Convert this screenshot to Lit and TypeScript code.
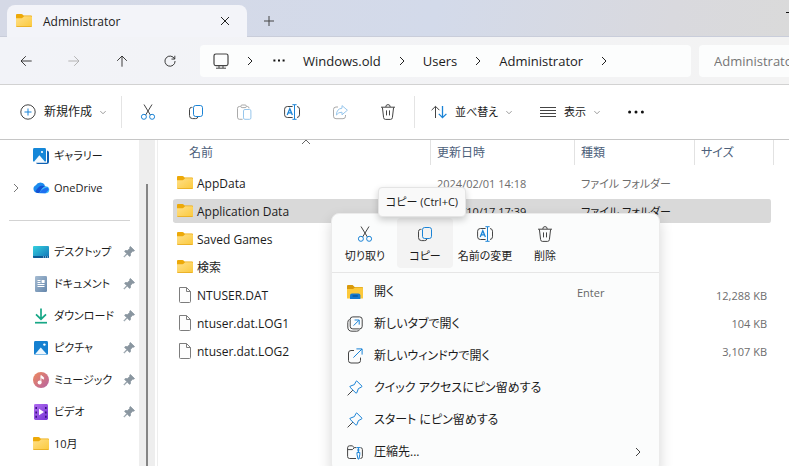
import { LitElement, html, svg, css, nothing, type TemplateResult } from "lit";
import { customElement, property } from "lit/decorators.js";
import { classMap } from "lit/directives/class-map.js";

/* All glyphs are drawn on a 16 x 16 grid. */
const glyphs: Record<string, TemplateResult> = {
  folder: svg`
    <defs><linearGradient id="f" x1="0" y1="0" x2="1" y2="1">
      <stop offset="0" stop-color="#ffe08a"/><stop offset="1" stop-color="#fbc93c"/>
    </linearGradient></defs>
    <path d="M0 2Q0 1 1 1H5.5Q6 1 6.6 1.6L7.6 2.6H15Q16 2.6 16 3.6V9H0Z" fill="#eda908"/>
    <path d="M0 5.2H5.6Q6.2 5.2 6.8 4.6L7.4 4Q7.8 3.2 8.4 3.2H15Q16 3.2 16 4.2V13Q16 14 15 14H1Q0 14 0 13Z" fill="url(#f)"/>
    <path d="M0 12.6Q0 14 1.2 14H14.8Q16 14 16 12.6Q16 13.2 14.8 13.2H1.2Q0 13.2 0 12.6Z" fill="#e6a91b"/>`,
  explorer: svg`
    <path d="M0 2Q0 1 1 1H5.6L7.6 3H15Q16 3 16 4V8H0Z" fill="#d99a0b"/>
    <path d="M0 5H6L8 3.6H15.4L16 4.4V14.4H0Z" fill="#fcc93b"/>
    <path d="M3 15V11.6Q3 9.6 5 9.6H11.4Q13.4 9.6 13.4 11.6V15Z" fill="#1479d0"/>
    <path d="M5.6 12H10.8" stroke="#0a4d8f" stroke-width="1.2"/>`,
  file: svg`
    <path d="M2.5 .5H9.5L13.5 4.5V14.5Q13.5 15.5 12.5 15.5H3.5Q2.5 15.5 2.5 14.5Z" fill="#fdfdfd" stroke="#7d7d7d"/>
    <path d="M9.5 .5V4.5H13.5" fill="none" stroke="#7d7d7d"/>`,
  gallery: svg`
    <path d="M14 2.4Q16 2.6 16 4.5V13.5Q16 16 13.5 16H5Q3.4 16 3 14.8H14Z" fill="#0e61b3"/>
    <rect width="13" height="14" rx="1.4" fill="#1587d8"/>
    <path d="M.8 14L6.4 7.2 12.2 14Z" fill="#f3faff"/><circle cx="9" cy="4" r="1.1" fill="#fff"/>`,
  cloud: svg`
    <path d="M4 12.8A4 4 0 0 1 2.8 5.2 5.2 5.2 0 0 1 12 5.2L6.4 12.8Z" fill="#1c8bee"/>
    <path d="M6 12.9L10.2 6.9A3.6 3.6 0 0 1 14 6.6 3.4 3.4 0 0 1 12.8 13.2H5Z" fill="#3ec0f8"/>
    <path d="M2.4 11.4Q6 5 9.6 5.8L12.8 6.2Q8.4 7.4 6.4 12.9H4Z" fill="#1352d4"/>
    <path d="M6.4 13.1Q9 8 14.6 7.2L15.8 9.8 12.4 13.3Z" fill="#1f6ff0"/>`,
  desktop: svg`
    <defs><linearGradient id="d" x1="0" y1="0" x2="1" y2="1">
      <stop offset="0" stop-color="#35d0de"/><stop offset="1" stop-color="#1273b8"/>
    </linearGradient></defs>
    <rect y="2" width="16" height="12" rx="1" fill="url(#d)"/>
    <path d="M0 12H16V13Q16 14 15 14H1Q0 14 0 13Z" fill="#0d5b95"/>
    <path d="M10 13H11M12 13H13M14 13H15" stroke="#bfe9ff"/>`,
  document: svg`
    <defs><linearGradient id="p" x1="0" y1="0" x2="1" y2="1">
      <stop offset="0" stop-color="#a6bcd2"/><stop offset="1" stop-color="#6486ab"/>
    </linearGradient></defs>
    <rect x="2" width="12" height="16" rx="1.2" fill="url(#p)"/>
    <path d="M4.5 4.5H7.5M4.5 6.5H7.5M4.5 8.5H11.5M4.5 10.5H11.5" stroke="#fff"/>
    <rect x="8.6" y="4" width="3" height="3" fill="#fff"/>`,
  download: svg`
    <path d="M8 .4V11M3 6.4L8 11.2 13 6.4" fill="none" stroke="#17a786" stroke-width="1.7"/>
    <path d="M2 14.7H14" stroke="#17a786" stroke-width="1.7"/>`,
  picture: svg`
    <rect x="1" y="1" width="14" height="14" rx="1.4" fill="#1580d0"/>
    <path d="M1.8 14.4L7.8 7.4 14 14.4Z" fill="#eef8ff"/><circle cx="11.4" cy="4.6" r="1.2" fill="#fff"/>`,
  music: svg`
    <defs><linearGradient id="m" x1="0" y1="0" x2="1" y2="1">
      <stop offset="0" stop-color="#ef8a5c"/><stop offset="1" stop-color="#b562a3"/>
    </linearGradient></defs>
    <circle cx="8" cy="8" r="8" fill="url(#m)"/>
    <circle cx="6.6" cy="10.6" r="2" fill="#fff"/><path d="M7.9 10.6V3.4L10.6 5.4V7.2L7.9 5.6" fill="#fff" stroke="#fff" stroke-width=".8"/>`,
  video: svg`
    <defs><linearGradient id="v" x1="0" y1="0" x2="1" y2="1">
      <stop offset="0" stop-color="#b06bf0"/><stop offset="1" stop-color="#7637d4"/>
    </linearGradient></defs>
    <rect x="1" width="14" height="16" rx="1.4" fill="url(#v)"/>
    <path d="M3.2 3V14M12.8 3V14" stroke="#3b1180" stroke-width="1.6" stroke-dasharray="2 2.4"/>
    <path d="M6 4.8L11 8 6 11.2Z" fill="#fff"/>`,
  pinned: svg`
    <path d="M9.6 1.6L14.4 6.4 13.2 7.2 12 7.2 9.8 9.6 9.6 12.4 8.6 13 6 10.4 2.6 13.8 2.2 13.4 5.4 9.8 3 7.4 3.6 6.4 6.4 6.2 8.8 4 8.8 2.6Z" fill="#8a96a0" stroke="#8a96a0" stroke-width=".8" stroke-linejoin="round"/>`,
  close: svg`<path d="M4 4L12 12M12 4L4 12"/>`,
  plus: svg`<path d="M8 3V13M3 8H13"/>`,
  back: svg`<path d="M14.5 8H2.5M7.8 2.5L2.3 8 7.8 13.5"/>`,
  forward: svg`<path d="M1.5 8H13.5M8.2 2.5L13.7 8 8.2 13.5"/>`,
  up: svg`<path d="M8 14.5V2.5M2.5 7.8L8 2.3 13.5 7.8"/>`,
  refresh: svg`<path d="M13.2 5.6A5.8 5.8 0 1 0 13.8 8M13.5 2V5.8H9.7"/>`,
  pc: svg`<rect x="1" y="1" width="14" height="11.6" rx="1.8" stroke-width="1.2"/><path d="M6 13V15M10 13V15M3 15.2H13"/>`,
  right: svg`<path d="M6 4L10 8 6 12"/>`,
  down: svg`<path d="M5 7L8 10 11 7"/>`,
  caretUp: svg`<path d="M4 10L8 6 12 10"/>`,
  dots: svg`<path d="M2.4 7.5h2M7 7.5h2M11.6 7.5h2" stroke-width="2"/>`,
  bigDots: svg`<g class="solid"><circle cx="1.6" cy="8" r="1.5"/><circle cx="8" cy="8" r="1.5"/><circle cx="14.4" cy="8" r="1.5"/></g>`,
  create: svg`<circle cx="8" cy="8" r="7.2"/><path class="blue" d="M8 4.5V11.5M4.5 8H11.5"/>`,
  cut: svg`<path d="M4 .5L10.4 11M12 .5L5.6 11"/><g class="blue"><circle cx="3.9" cy="12.8" r="2.5"/><circle cx="12.1" cy="12.8" r="2.5"/></g>`,
  copy: svg`<path d="M4.4 3.4H3.5Q1.5 3.4 1.5 5.6V11.6Q1.5 14.6 4.5 14.6H7.5Q9.8 14.6 9.8 13"/><rect class="blue" x="5.5" y="1.5" width="9" height="11" rx="2.2"/>`,
  paste: svg`<path d="M4.6 2.5H3.4Q1.5 2.5 1.5 4.4V13.2Q1.5 15.3 3.4 15.3H6.6M10.6 2.5H11.6Q13 2.5 13 4.4"/><rect x="4.8" y="1" width="5.6" height="2.6" rx="1.3"/><rect class="blue" x="7.5" y="5.5" width="7.4" height="9.8" rx="1.4"/>`,
  rename: svg`<path d="M8.6 2.5H3.4Q.6 2.5 .6 5.2V10.8Q.6 13.5 3.4 13.5H8.6M13 2.5Q15.5 2.8 15.5 5.2V10.8Q15.5 13.2 13 13.5"/><path class="blue" d="M10.5 1V15M8.4 .7H12.6M8.4 15.3H12.6"/><path class="blue" d="M3.2 11L5.8 4.8 8.4 11M4.2 8.9H7.4" stroke-width="1.3"/>`,
  share: svg`<path d="M6 3H4Q1.5 3 1.5 5.5V12.2Q1.5 14.7 4 14.7H11Q13.5 14.7 13.5 12.2V11"/><path class="blue" d="M10 1.6L15.4 6.2 10 10.8V8.2Q6.4 8 4.4 11Q4.6 4.8 10 4.2Z" stroke-linejoin="round"/>`,
  trash: svg`<path d="M1 3.2H15M2.4 3.4L3.6 13.6Q3.8 15.4 5.4 15.4H10.6Q12.2 15.4 12.4 13.6L13.6 3.4M5.8 3Q5.8 .6 8 .6T10.2 3M6.5 6.4V11.4M9.5 6.4V11.4"/>`,
  sort: svg`<path d="M4.5 14V2.5M.6 6.2L4.5 2.3 8.4 6.2"/><path class="blue" d="M11.5 2V13.5M7.8 9.9L11.5 13.7 15.4 9.9" stroke-width="1.3"/>`,
  lines: svg`<path d="M0 3.5H16M0 6.5H16M0 9.5H16M0 12.5H16"/>`,
  newTab: svg`<path d="M2.6 3.4Q.8 4 .8 6.4V11Q.8 15.2 5 15.2H9.6Q12 15.2 12.6 13.6"/><rect x="3.2" y=".9" width="12" height="12" rx="2.6"/><path class="blue" d="M6.6 9.6L12 4.2M7.6 4H12.2V8.6"/>`,
  newWindow: svg`<path d="M7 2.5H4Q1.5 2.5 1.5 5V12.5Q1.5 15 4 15H11Q13.5 15 13.5 12.5V9.6"/><path class="blue" d="M6.4 9.6L15 1M9.4 .9H15.1V6.6"/>`,
  pin: svg`<path class="blue" d="M9.8 1L15 6.2Q15 7 14.2 7.2L11.4 8.6 9.8 12.8 9 13.2 2.8 7 3.2 6.2 7.4 4.6 8.8 1.8Q9 1 9.8 1Z" stroke-linejoin="round"/><path d="M5.8 10.2L.6 15.4"/>`,
  zip: svg`<path d="M9 14.5H2.6Q.6 14.5 .6 12.5V3.8Q.6 1.8 2.6 1.8H5.2L7.2 3.6H9.4M.8 5.6H5.4L7.2 3.8M13.4 3.6Q15.4 3.6 15.4 5.6V12.5Q15.4 14.5 13.4 14.5"/><path class="blue" d="M9.6 3.6H13.2M11.4 3.6V9M10 6H12.6M10 8.4H12.8V10.4L12 15H11L10 10.4Z"/>`,
};

/* Glyphs that carry their own fills; the others are one-pixel outlines. */
const coloured = new Set(["folder", "explorer", "file", "gallery", "cloud", "desktop", "document", "download", "picture", "music", "video", "pinned"]);

@customElement("ui-icon")
class UiIcon extends LitElement {
  @property() name = "";
  static styles = css`
    :host { display: inline-flex; flex: none; width: 16px; height: 16px; color: #444; }
    svg { width: 100%; height: 100%; overflow: visible; }
    .line { fill: none; stroke: currentColor; }
    .blue { stroke: #1a83d6; }
    .solid { fill: currentColor; stroke: none; }
  `;
  render() {
    return html`<svg viewBox="0 0 16 16" aria-hidden="true" class=${classMap({ line: !coloured.has(this.name) })}>${glyphs[this.name]}</svg>`;
  }
}

const icon = (name: string, cls = "") => html`<ui-icon class=${cls} name=${name}></ui-icon>`;

const commands = [
  { icon: "cut", label: "切り取り" },
  { icon: "copy", label: "コピー" },
  { icon: "paste", label: "貼り付け", off: true },
  { icon: "rename", label: "名前の変更" },
  { icon: "share", label: "共有", off: true },
  { icon: "trash", label: "削除" },
];

const places = [
  { icon: "desktop", label: "デスクトップ", pinned: true },
  { icon: "document", label: "ドキュメント", pinned: true },
  { icon: "download", label: "ダウンロード", pinned: true },
  { icon: "picture", label: "ピクチャ", pinned: true },
  { icon: "music", label: "ミュージック", pinned: true },
  { icon: "video", label: "ビデオ", pinned: true },
  { icon: "folder", label: "10月", pinned: false },
];

const files = [
  { icon: "folder", name: "AppData", date: "2024/02/01 14:18", type: "ファイル フォルダー", size: "" },
  { icon: "folder", name: "Application Data", date: "2023/10/17 17:39", type: "ファイル フォルダー", size: "", selected: true },
  { icon: "folder", name: "Saved Games", date: "", type: "", size: "" },
  { icon: "folder", name: "検索", date: "", type: "", size: "" },
  { icon: "file", name: "NTUSER.DAT", date: "", type: "", size: "12,288 KB" },
  { icon: "file", name: "ntuser.dat.LOG1", date: "", type: "", size: "104 KB" },
  { icon: "file", name: "ntuser.dat.LOG2", date: "", type: "", size: "3,107 KB" },
];

const quickActions = [
  { icon: "cut", label: "切り取り" },
  { icon: "copy", label: "コピー", hover: true },
  { icon: "rename", label: "名前の変更" },
  { icon: "trash", label: "削除" },
];

const menuItems = [
  { icon: "explorer", label: "開く", key: "Enter" },
  { icon: "newTab", label: "新しいタブで開く" },
  { icon: "newWindow", label: "新しいウィンドウで開く" },
  { icon: "pin", label: "クイック アクセスにピン留めする" },
  { icon: "pin", label: "スタート にピン留めする" },
  { icon: "zip", label: "圧縮先...", sub: true },
];

@customElement("app-root")
class AppRoot extends LitElement {
  static styles = css`
    :host {
      display: flex; flex-direction: column; position: relative;
      height: 100vh; overflow: hidden; background: #fff; color: #1b1b1b;
      font: 12px/16px "Open Sans", "Noto Sans CJK JP", sans-serif;
      font-feature-settings: "palt";
    }
    * { box-sizing: border-box; }
    button, input { font: inherit; font-feature-settings: inherit; color: inherit; background: none; border: 0; padding: 0; margin: 0; outline: 0; }
    button { display: inline-flex; align-items: center; justify-content: center; white-space: nowrap; }
    a { color: inherit; text-decoration: none; }

    .titlebar {
      display: flex; align-items: flex-end; height: 37px; flex: none; padding-left: 7px;
      background: linear-gradient(100deg, #d5d9e6, #d3daea 55%, #d9d9de 85%, #dadada);
      box-shadow: inset 0 -1px #c9cdda;
    }
    .tab {
      display: flex; align-items: center; width: 240px; height: 32px; padding: 0 14px 0 9px;
      border-radius: 8px 8px 0 0; background: #f3f4f9;
    }
    .tab ui-icon { margin-right: 11px; }
    .tab span { flex: 1; padding-top: 2px; }
    .tab button ui-icon { margin: 0; color: #222; }
    .add { width: 44px; height: 32px; }
    .minimize { margin-left: auto; align-self: flex-start; width: 3px; height: 25px; }
    .minimize::before { content: ""; width: 3px; height: 1px; background: #111; }

    .navbar {
      display: flex; align-items: center; height: 48px; flex: none; padding-left: 2px;
      background: linear-gradient(100deg, #f2f3f8, #f3f3f3); border-bottom: 1px solid #d2d2d2;
    }
    .navbar > button { width: 48px; height: 32px; }
    .navbar > button ui-icon { width: 14px; height: 14px; color: #222; }
    .navbar > button[disabled] ui-icon { color: #aaa; }
    .address {
      display: flex; align-items: center; flex: 1; height: 32px; margin: 0 8px 0 6px; padding-left: 13px;
      border-radius: 4px; background: #fcfdfd; font-size: 13px;
    }
    .address .sep { margin: 0 13px; color: #222; }
    .address .others { margin-right: 16px; }
    .others ui-icon { color: #111; }
    .address .crumb { white-space: nowrap; }
    .search { width: 90px; height: 32px; flex: none; padding-left: 15px; border-radius: 4px 0 0 4px; background: #fcfdfd; font-size: 13px; }
    .search::placeholder { color: #757575; opacity: 1; }

    .commands { display: flex; align-items: center; height: 55px; flex: none; padding-left: 20px; border-bottom: 1px solid #c6c6c6; }
    .tools { display: flex; padding: 0 2px; }
    .tool { width: 48px; height: 32px; }
    .off { opacity: .45; }
    .drop { height: 32px; justify-content: flex-start; }
    .drop ui-icon + span { margin: 0 4px 0 8px; }
    .drop .chev { width: 14px; height: 14px; color: #8a8a8a; }
    .rule { width: 1px; height: 32px; background: #e4e4e4; }
    .new { width: 101px; }
    .order { width: 109px; margin-left: 16px; font-size: 11px; }
    .view { width: 88px; font-size: 11px; }
    .more ui-icon { color: #111; }

    .body { display: flex; flex: 1; min-height: 0; }
    nav { width: 139px; flex: none; overflow: hidden; font-size: 11px; }
    nav a { display: flex; align-items: center; height: 32px; padding: 0 3px 0 8px; white-space: nowrap; }
    nav a .lead { width: 25px; flex: none; display: flex; }
    nav a .lead ui-icon { color: #777; }
    nav a .label { flex: 1; margin-left: 5px; }
    .pinned { width: 14px; height: 14px; }
    nav hr { height: 1px; margin: 16px 9px 15px; border: 0; background: #d3d3d3; }
    .track { display: flex; justify-content: center; width: 16px; flex: none; padding-top: 44px; background: #eee; }
    .track div { width: 2px; background: #858585; }
    main { flex: 1; min-width: 0; margin-left: 2px; padding: 0 15px; border-left: 1px solid #eee; }

    table { width: 100%; table-layout: fixed; border-collapse: separate; border-spacing: 0; white-space: nowrap; }
    th { position: relative; height: 29px; padding: 0; vertical-align: top; text-align: left; font-weight: 400; color: #4c607a; }
    th div { height: 25px; padding: 5px 6px 0; border-left: 1px solid #e2e2e2; }
    th:first-child div { border-left: 0; padding-left: 16px; }
    th:last-child div { border-right: 1px solid #e2e2e2; }
    th ui-icon { position: absolute; top: -6px; left: calc(50% - 4px); color: #666; }
    .date { width: 144px; } .type { width: 120px; } .size { width: 80px; }
    td { height: 28px; padding: 2px 0 0 7px; font-size: 11px; color: #6d6d6d; border: solid transparent; border-width: 2px 0; background-clip: padding-box; }
    td:first-child { padding: 0 0 0 4px; font-size: 12px; color: #1b1b1b; border-radius: 4px 0 0 4px; }
    td:last-child { padding-right: 4px; border-right-width: 3px; text-align: right; border-radius: 0 5px 5px 0; }
    .selected td { background-color: #d9d9d9; color: #1b1b1b; }
    .name { display: flex; align-items: center; gap: 4px; }
    .name span { padding-top: 2px; }

    .menu {
      position: absolute; top: 213px; left: 331px; width: 329px; border: 1px solid #ebebeb; border-radius: 8px;
      background: #fbfcfc; box-shadow: 0 6px 14px rgba(0, 0, 0, .16);
    }
    .quick { display: flex; gap: 4px; padding: 4px 5px; border-bottom: 1px solid #e6e6e6; font-size: 11px; }
    .quick button { flex-direction: column; justify-content: flex-start; gap: 6px; width: 56px; height: 50px; padding-top: 8px; border-radius: 4px; }
    .quick .hover { background: #f3f3f3; }
    .items { padding: 3px 0; }
    .items button { display: grid; grid-template-columns: 16px 1fr 42px 16px; column-gap: 11px; width: 100%; height: 32px; padding: 0 13px 0 15px; text-align: left; }
    .items button .key { grid-column: 3; padding-top: 2px; font-size: 11px; color: #666; }
    .items .sub { grid-column: 4; }
    .tooltip {
      position: absolute; top: 187px; left: 378px; width: 88px; height: 30px; line-height: 28px; text-align: center; font-size: 11px;
      border: 1px solid #e4e4e4; border-radius: 4px; background: #f9f9f9; box-shadow: 0 3px 7px rgba(0, 0, 0, .2);
    }
  `;

  private crumb(text: string) {
    return html`<a class="crumb" href="#">${text}</a>${icon("right", "sep")}`;
  }

  render() {
    return html`
      <header class="titlebar">
        <div class="tab">${icon("folder")}<span>Administrator</span><button aria-label="閉じる">${icon("close")}</button></div>
        <button class="add" aria-label="新しいタブ">${icon("plus")}</button>
        <button class="minimize" aria-label="最小化"></button>
      </header>
      <div class="navbar">
        <button aria-label="戻る">${icon("back")}</button>
        <button aria-label="進む" disabled>${icon("forward")}</button>
        <button aria-label="上へ">${icon("up")}</button>
        <button aria-label="更新">${icon("refresh")}</button>
        <div class="address">
          ${icon("pc")}${icon("right", "sep")}
          <button class="others" aria-label="その他の場所">${icon("dots")}</button>
          ${["Windows.old", "Users", "Administrator"].map((c) => this.crumb(c))}
        </div>
        <input class="search" type="text" aria-label="検索" placeholder="Administrator" />
      </div>
      <div class="commands">
        <button class="drop new">${icon("create")}<span>新規作成</span>${icon("down", "chev")}</button>
        <div class="rule"></div>
        <div class="tools">
          ${commands.map((c) => html`<button class=${classMap({ tool: true, off: !!c.off })} aria-label=${c.label} ?disabled=${!!c.off}>${icon(c.icon)}</button>`)}
        </div>
        <div class="rule"></div>
        <button class="drop order">${icon("sort")}<span>並べ替え</span>${icon("down", "chev")}</button>
        <button class="drop view">${icon("lines")}<span>表示</span>${icon("down", "chev")}</button>
        <button class="more" aria-label="もっと見る">${icon("bigDots")}</button>
      </div>
      <div class="body">
        <nav>
          <a href="#"><span class="lead"></span>${icon("gallery")}<span class="label">ギャラリー</span></a>
          <a href="#"><span class="lead">${icon("right")}</span>${icon("cloud")}<span class="label">OneDrive</span></a>
          <hr />
          ${places.map((p) => html`<a href="#"><span class="lead"></span>${icon(p.icon)}<span class="label">${p.label}</span>${p.pinned ? icon("pinned", "pinned") : nothing}</a>`)}
        </nav>
        <div class="track"><div></div></div>
        <main>
          <table>
            <thead><tr>
              <th><div>名前</div>${icon("caretUp")}</th>
              <th class="date"><div>更新日時</div></th>
              <th class="type"><div>種類</div></th>
              <th class="size"><div>サイズ</div></th>
            </tr></thead>
            <tbody>
              ${files.map((f) => html`<tr class=${classMap({ selected: !!f.selected })}>
                <td><div class="name">${icon(f.icon)}<span>${f.name}</span></div></td>
                <td>${f.date}</td><td>${f.type}</td><td>${f.size}</td>
              </tr>`)}
            </tbody>
          </table>
        </main>
      </div>
      <div class="menu" role="menu">
        <div class="quick">
          ${quickActions.map((q) => html`<button class=${classMap({ hover: !!q.hover })}>${icon(q.icon)}<span>${q.label}</span></button>`)}
        </div>
        <div class="items">
          ${menuItems.map((m) => html`<button role="menuitem">${icon(m.icon)}<span>${m.label}</span>
            ${m.key ? html`<span class="key">${m.key}</span>` : nothing}${m.sub ? icon("right", "sub") : nothing}</button>`)}
        </div>
      </div>
      <div class="tooltip" role="tooltip">コピー (Ctrl+C)</div>
    `;
  }
}
